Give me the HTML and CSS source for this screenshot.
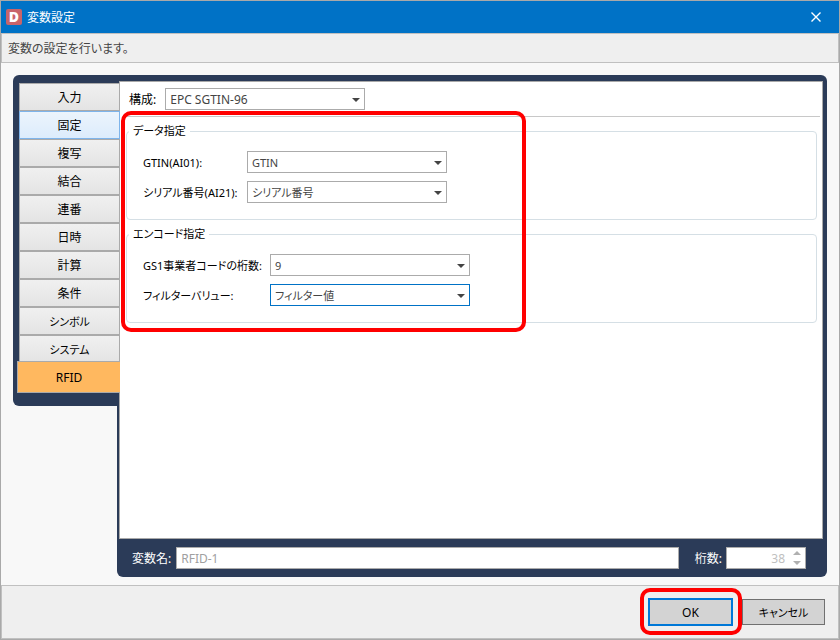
FILE: index.html
```html
<!DOCTYPE html>
<html lang="ja">

<head>
    <meta charset="UTF-8">
    <meta name="viewport" content="width=device-width, initial-scale=1.0">
    <title>変数設定</title>
    <link rel="stylesheet" href="styles.css">
</head>

<body>
    <div class="window">
        <header class="titlebar">
            <span class="app-icon">D</span>
            <h1>変数設定</h1>
            <button type="button" class="close" aria-label="閉じる">
                <svg width="10" height="10" viewBox="0 0 10 10"><path d="M0.5 0.5L9.5 9.5M9.5 0.5L0.5 9.5" fill="none" stroke="#fff" stroke-width="1.4"/></svg>
            </button>
        </header>
        <p class="info">変数の設定を行います。</p>

        <main class="content">
            <nav class="sidebar">
                <button type="button" class="tab">入力</button>
                <button type="button" class="tab hover">固定</button>
                <button type="button" class="tab">複写</button>
                <button type="button" class="tab">結合</button>
                <button type="button" class="tab">連番</button>
                <button type="button" class="tab">日時</button>
                <button type="button" class="tab">計算</button>
                <button type="button" class="tab">条件</button>
                <button type="button" class="tab kana">シンボル</button>
                <button type="button" class="tab kana">システム</button>
                <button type="button" class="tab active">RFID</button>
            </nav>

            <div class="panel">
                <div class="page">
                    <div class="scheme">
                        <label for="scheme">構成:</label>
                        <div class="combo">
                            <select id="scheme"><option>EPC SGTIN-96</option></select>
                            <svg width="8" height="4" viewBox="0 0 8 4"><path d="M0 0H8L4 4Z" fill="#444"/></svg>
                        </div>
                    </div>

                    <div class="groups">
                        <fieldset>
                            <legend>データ指定</legend>
                            <div class="fields">
                                <label for="gtin">GTIN(AI01):</label>
                                <div class="combo">
                                    <select id="gtin"><option>GTIN</option></select>
                                    <svg width="8" height="4" viewBox="0 0 8 4"><path d="M0 0H8L4 4Z" fill="#444"/></svg>
                                </div>
                                <label for="serial">シリアル番号(AI21):</label>
                                <div class="combo">
                                    <select id="serial"><option>シリアル番号</option></select>
                                    <svg width="8" height="4" viewBox="0 0 8 4"><path d="M0 0H8L4 4Z" fill="#444"/></svg>
                                </div>
                            </div>
                        </fieldset>
                        <fieldset>
                            <legend>エンコード指定</legend>
                            <div class="fields wide">
                                <label for="company">GS1事業者コードの桁数:</label>
                                <div class="combo">
                                    <select id="company"><option>9</option></select>
                                    <svg width="8" height="4" viewBox="0 0 8 4"><path d="M0 0H8L4 4Z" fill="#444"/></svg>
                                </div>
                                <label for="filter">フィルターバリュー:</label>
                                <div class="combo">
                                    <select id="filter" class="focused"><option>フィルター値</option></select>
                                    <svg width="8" height="4" viewBox="0 0 8 4"><path d="M0 0H8L4 4Z" fill="#444"/></svg>
                                </div>
                            </div>
                        </fieldset>
                        <div class="marker marker-groups"></div>
                    </div>
                </div>

                <div class="name-row">
                    <label for="name">変数名:</label>
                    <input type="text" id="name" value="RFID-1" disabled>
                    <label for="digits" class="digits-label">桁数:</label>
                    <div class="spinner">
                        <input type="number" id="digits" value="38" disabled>
                        <svg width="8" height="14" viewBox="0 0 8 14"><path d="M0 4L4 0L8 4ZM0 10H8L4 14Z" fill="#b0b0b0"/></svg>
                    </div>
                </div>
            </div>
        </main>

        <footer class="footer">
            <div class="ok-wrap">
                <button type="button" class="btn ok">OK</button>
                <div class="marker marker-ok"></div>
            </div>
            <button type="button" class="btn kana">キャンセル</button>
        </footer>
    </div>
</body>

</html>
```
FILE: styles.css
```css
* {
    box-sizing: border-box;
}

body {
    margin: 0;
    font-family: "Noto Sans", "Noto Sans CJK JP", sans-serif;
    font-size: 12px;
    line-height: 18px;
    font-feature-settings: "palt";
    color: #000;
}

button,
input,
select {
    font: inherit;
    font-feature-settings: inherit;
    color: inherit;
    margin: 0;
}

.window {
    display: flex;
    flex-direction: column;
    min-height: 100vh;
    border: 1px solid #a9a9a9;
    background: #f8f8f8;
}

/* Title bar */
.titlebar {
    display: flex;
    align-items: center;
    height: 32px;
    padding: 0 5px;
    background: #0072c6;
    color: #fff;
}

.app-icon {
    width: 16px;
    height: 16px;
    margin-right: 5px;
    border-radius: 2px;
    background: #c8646a;
    font-size: 14px;
    font-weight: 900;
    line-height: 16px;
    text-align: center;
}

.titlebar h1 {
    flex: 1;
    margin: 0;
    padding-top: 2px;
    font-size: 12px;
    font-weight: normal;
}

.close {
    display: flex;
    align-items: center;
    justify-content: center;
    width: 36px;
    height: 32px;
    padding: 0;
    border: none;
    background: none;
}

.info {
    margin: 0;
    padding: 6px 6px 4px;
    border: 1px solid #c0c0c0;
    background: #efefef;
    color: #444;
}

/* Main area */
.content {
    flex: 1;
    display: flex;
    align-items: stretch;
    padding: 12px 12px 8px;
}

.sidebar {
    align-self: flex-start;
    display: flex;
    flex-direction: column;
    width: 104px;
    padding: 8px 0 13px 6px;
    border-radius: 6px 0 0 6px;
    background: #2b3b58;
}

.tab {
    z-index: 1;
    height: 28px;
    margin-right: -3px;
    padding: 2px 0 0;
    border: 1px solid #aaa;
    background: linear-gradient(#f0f0f0, #e4e4e4);
}

.tab.hover {
    border-color: #7eb4ea;
    background: linear-gradient(#ecf4fc, #dcecfc);
}

.tab.active {
    height: 32px;
    margin-top: -2px;
    margin-left: -2px;
    border-right: none;
    background: #ffb85f;
}

.kana {
    font-size: 11px;
}

.panel {
    flex: 1;
    display: flex;
    flex-direction: column;
    min-width: 0;
    padding: 6px 4px 0 2px;
    border-radius: 0 6px 6px 6px;
    background: #2b3b58;
}

.page {
    flex: 1;
    padding: 0 2px 0 3px;
    border: 1px solid #a9a9a9;
    background: #fff;
}

.scheme {
    display: flex;
    align-items: center;
    gap: 9px;
    padding: 6px 0 6px 6px;
    border-bottom: 1px solid #c8c8c8;
}

label {
    padding-top: 2px;
    white-space: nowrap;
}

/* Combo boxes */
.combo {
    position: relative;
    width: 200px;
}

.combo select {
    display: block;
    width: 100%;
    height: 22px;
    padding: 2px 20px 0 4px;
    border: 1px solid #ababab;
    border-radius: 0;
    background: #fff;
    color: #444;
    appearance: none;
}

.combo select.focused {
    border-color: #0072c6;
}

.combo svg {
    position: absolute;
    top: 10px;
    right: 5px;
    pointer-events: none;
}

/* Group boxes */
.groups {
    position: relative;
    display: flex;
    flex-direction: column;
    gap: 5px;
    padding: 5px 3px 0;
}

fieldset {
    min-width: 0;
    margin: 0;
    padding: 11px 16px 16px 2px;
    border: 1px solid #d5dfe5;
    border-radius: 4px;
    font-size: 11px;
}

legend {
    padding: 0 4px;
}

.fields {
    display: grid;
    grid-template-columns: 104px 200px;
    row-gap: 8px;
    align-items: center;
    padding-left: 14px;
}

.fields.wide {
    grid-template-columns: 127px 200px;
}

/* Name and digits */
.name-row {
    display: flex;
    align-items: center;
    height: 38px;
    padding: 0 17px 0 13px;
    color: #fff;
}

.name-row input {
    height: 22px;
    padding: 0 4px;
    border: 1px solid #ababab;
    background: #fff;
    color: #a0a0a0;
}

#name {
    flex: 1;
    min-width: 0;
    margin-left: 5px;
}

.digits-label {
    margin-left: 16px;
}

.spinner {
    position: relative;
    width: 80px;
    margin-left: 4px;
}

.spinner input {
    display: block;
    width: 100%;
    padding-right: 20px;
    color: #c0c0c0;
    text-align: right;
    appearance: textfield;
}

.spinner input::-webkit-inner-spin-button {
    display: none;
}

.spinner svg {
    position: absolute;
    top: 4px;
    right: 5px;
}

/* Buttons */
.footer {
    display: flex;
    align-items: center;
    justify-content: flex-end;
    gap: 9px;
    height: 54px;
    padding-right: 13px;
    border: 1px solid #c0c0c0;
    background: #efefef;
}

.btn {
    display: block;
    width: 83px;
    height: 26px;
    padding: 2px 0 0;
    border: 1px solid #707070;
    background: #d3d3d3;
}

.btn.ok {
    width: 85px;
    height: 28px;
    border: 2px solid #0078d7;
}

.ok-wrap {
    position: relative;
}

/* Red highlight frames */
.marker {
    position: absolute;
    border: 4px solid #f00;
    border-radius: 10px;
    pointer-events: none;
}

.marker-groups {
    top: -6px;
    bottom: -9px;
    left: -2px;
    width: 405px;
}

.marker-ok {
    top: -10px;
    right: -9px;
    bottom: -9px;
    left: -8px;
}
```
